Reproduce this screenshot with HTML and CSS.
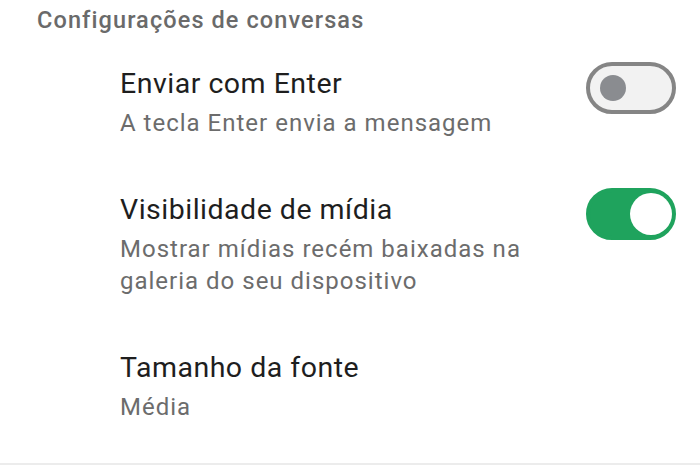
FILE: index.html
```html
<!DOCTYPE html>
<html lang="pt-BR">
<head>
    <meta charset="UTF-8">
    <meta name="viewport" content="width=device-width, initial-scale=1.0">
    <title>Configurações de conversas</title>
    <link rel="stylesheet" href="styles.css">
</head>
<body>
    <div class="settings-section">
        <h3 class="section-title">Configurações de conversas</h3>

        <div class="setting-row">
            <div class="setting-text">
                <div class="setting-name">Enviar com Enter</div>
                <div class="setting-desc">A tecla Enter envia a mensagem</div>
            </div>
            <div class="toggle"></div>
        </div>

        <div class="setting-row">
            <div class="setting-text">
                <div class="setting-name">Visibilidade de mídia</div>
                <div class="setting-desc">Mostrar mídias recém baixadas na<br>galeria do seu dispositivo</div>
            </div>
            <div class="toggle on"></div>
        </div>

        <div class="setting-row">
            <div class="setting-text">
                <div class="setting-name">Tamanho da fonte</div>
                <div class="setting-desc">Média</div>
            </div>
        </div>
    </div>
</body>
</html>
```

FILE: styles.css
```css
/* Base styles */
* {
    margin: 0;
    padding: 0;
    box-sizing: border-box;
}

body {
    font-family: Roboto, 'Noto Sans', sans-serif;
    background-color: #fff;
    color: #1f1f1f;
    height: 100vh;
    overflow: hidden;
}

/* Section */
.settings-section {
    padding-top: 5px;
    padding-bottom: 13px;
    border-bottom: 2px solid #ececec;
}

.section-title {
    font-size: 23.5px;
    font-weight: 500;
    line-height: 30px;
    letter-spacing: 1.1px;
    color: #6a6a6a;
    padding-left: 37px;
    margin-bottom: 5px;
}

/* Rows */
.setting-row {
    display: flex;
    align-items: flex-start;
    justify-content: space-between;
    padding: 27px 24px 27px 120px;
}

.setting-name {
    font-size: 28.5px;
    line-height: 34px;
    letter-spacing: 0.5px;
    color: #1e1e1e;
    margin-bottom: 6px;
}

.setting-desc {
    font-size: 24px;
    line-height: 32px;
    letter-spacing: 1px;
    color: #6c6c6c;
}

/* Toggle switch */
.toggle {
    position: relative;
    width: 90px;
    height: 52px;
    margin-top: -5px;
    border: 4px solid #858585;
    border-radius: 26px;
    background-color: #f2f2f2;
    flex-shrink: 0;
}

.toggle::after {
    content: '';
    position: absolute;
    left: 10px;
    top: 9px;
    width: 26px;
    height: 26px;
    border-radius: 50%;
    background-color: #8a8c90;
}

.toggle.on {
    border-color: #1fa35d;
    background-color: #1fa35d;
}

.toggle.on::after {
    left: 40px;
    top: 1px;
    width: 42px;
    height: 42px;
    background-color: #fff;
}
```
